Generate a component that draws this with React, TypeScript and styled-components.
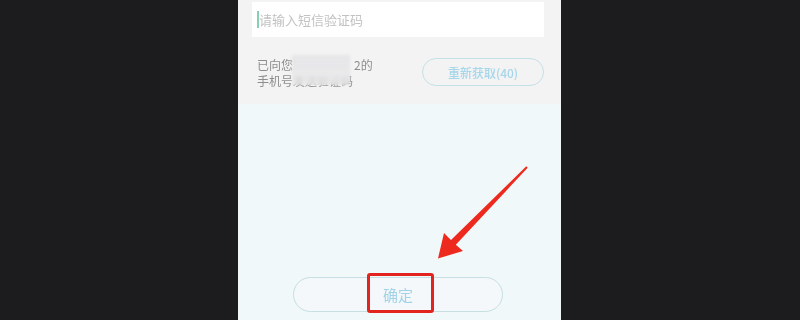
import React from "react";
import styled, { createGlobalStyle } from "styled-components";

const Global = createGlobalStyle`
  html, body { margin: 0; padding: 0; background: #1c1b1d; }
  body { font-family: "Noto Sans CJK SC", "Noto Sans", sans-serif; }
`;

const Stage = styled.div`
  position: relative;
  width: 800px;
  height: 320px;
  overflow: hidden;
  background: #1c1b1d;
  display: flex;
  justify-content: center;
`;

const Phone = styled.div`
  width: 323px;
  height: 320px;
  display: flex;
  flex-direction: column;
  margin-left: -1px;
`;

const TopSection = styled.div`
  height: 104px;
  background: #f3f3f3;
  padding: 2px 17px 0 14px;
  box-sizing: border-box;
  display: flex;
  flex-direction: column;
`;

const InputBox = styled.div`
  height: 35px;
  background: #ffffff;
  display: flex;
  align-items: center;
  padding-left: 5px;
`;

const Caret = styled.span`
  display: inline-block;
  width: 2px;
  height: 17px;
  background: #86cfb3;
`;

const Placeholder = styled.span`
  font-size: 13px;
  color: #c2c2c2;
  line-height: 1;
`;

const InfoRow = styled.div`
  margin-top: 21px;
  height: 28px;
  display: flex;
  justify-content: space-between;
  align-items: center;
`;

const InfoText = styled.div`
  position: relative;
  padding-left: 5px;
  display: flex;
  flex-direction: column;
  gap: 1px;
`;

const InfoLine = styled.div`
  font-size: 12px;
  line-height: 15px;
  height: 15px;
  overflow: visible;
  color: #8d8d8d;
  white-space: nowrap;
`;

const Masked = styled.span`
  display: inline-block;
  width: 61px;
`;

const Blur = styled.div`
  position: absolute;
  left: 40px;
  top: -2px;
  width: 58px;
  height: 30px;
  background: linear-gradient(
    to bottom,
    rgba(229, 229, 231, 0.97) 0%,
    rgba(230, 230, 232, 0.9) 50%,
    rgba(238, 238, 240, 0.55) 100%
  );
  filter: blur(1.5px);
  backdrop-filter: blur(1.5px);
`;

const RetryButton = styled.div`
  width: 122px;
  height: 28px;
  box-sizing: border-box;
  border: 1px solid #c4e1e7;
  border-radius: 14px;
  display: flex;
  align-items: center;
  justify-content: center;
  font-size: 12px;
  color: #a6d6ea;
  font-weight: 500;
`;

const BottomSection = styled.div`
  flex: 1;
  background: #f0f8f9;
  display: flex;
  flex-direction: column;
  justify-content: flex-end;
  align-items: center;
  padding-bottom: 8px;
`;

const ConfirmButton = styled.div`
  width: 210px;
  height: 35px;
  margin-left: -3px;
  box-sizing: border-box;
  border: 1px solid #c6dfe3;
  border-radius: 18px;
  background: #f4f8fa;
  display: flex;
  align-items: center;
  justify-content: center;
  font-size: 15px;
  color: #a2d2e6;
`;

const Annotation = styled.svg`
  position: absolute;
  left: 0;
  top: 0;
  pointer-events: none;
`;

const HighlightBox = styled.div`
  position: absolute;
  left: 367px;
  top: 273px;
  width: 67px;
  height: 40px;
  box-sizing: border-box;
  border: 3px solid #e3231d;
  border-radius: 3px;
`;

export default function App() {
  return (
    <>
      <Global />
      <Stage>
        <Phone>
          <TopSection>
            <InputBox>
              <Caret />
              <Placeholder>请输入短信验证码</Placeholder>
            </InputBox>
            <InfoRow>
              <InfoText>
                <InfoLine>
                  已向您<Masked />2的
                </InfoLine>
                <InfoLine>手机号发送验证码</InfoLine>
                <Blur />
              </InfoText>
              <RetryButton>重新获取(40)</RetryButton>
            </InfoRow>
          </TopSection>
          <BottomSection>
            <ConfirmButton>确定</ConfirmButton>
          </BottomSection>
        </Phone>
        <HighlightBox />
        <Annotation width="800" height="320" viewBox="0 0 800 320">
          <polygon
            fill="#ee2a1e"
            points="527.7,167.7 455.8,244.7 463,251 438,258.5 444,233 451,240 526.3,166.3"
          />
        </Annotation>
      </Stage>
    </>
  );
}
